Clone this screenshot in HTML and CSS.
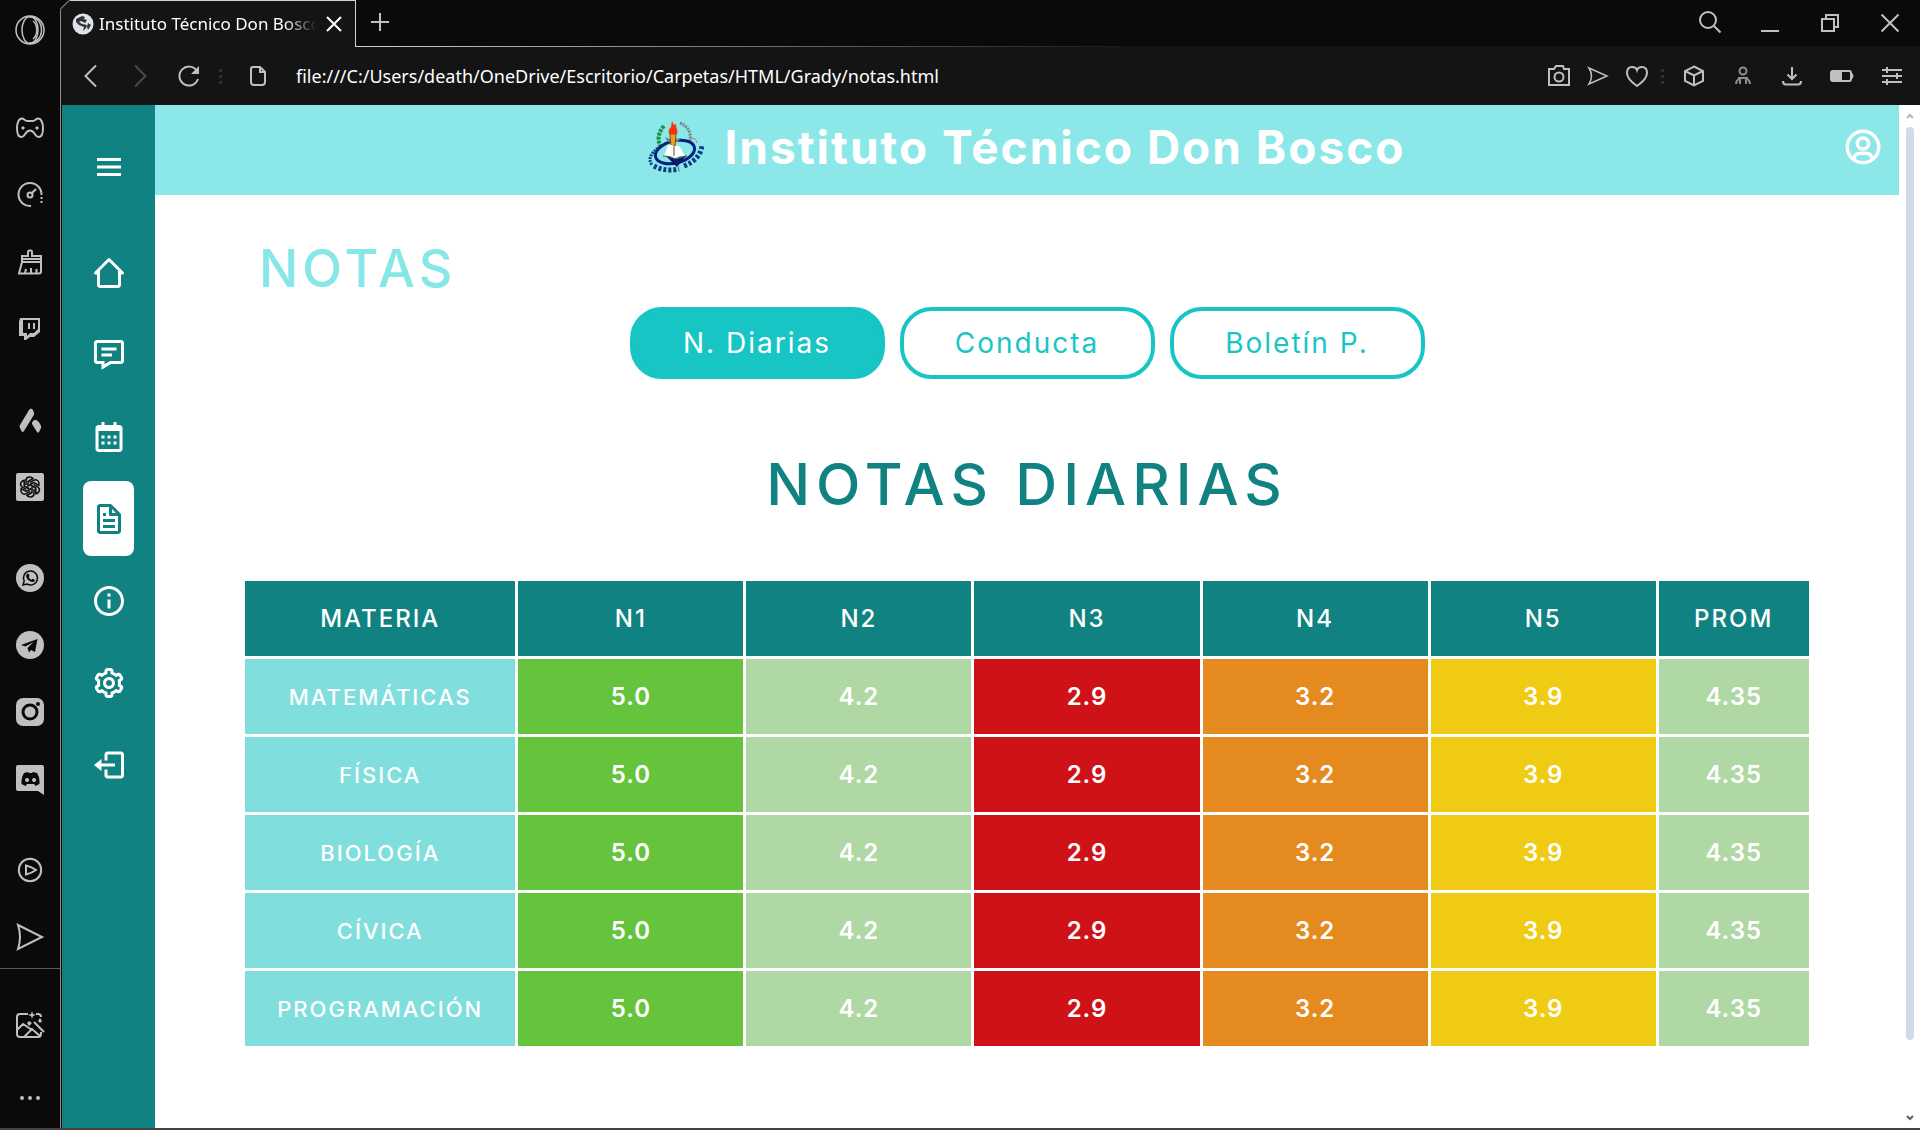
FILE: index.html
```html
<!DOCTYPE html>
<html lang="es">
<head>
<meta charset="utf-8">
<title>Instituto Técnico Don Bosco</title>
<link rel="stylesheet" href="styles.css">
</head>
<body>
<div class="browser">
  <aside class="dock" aria-label="Barra lateral del navegador">
    <div class="dock-group first">
      <button class="icon-btn" aria-label="Opera"><svg width="32" height="32" viewBox="0 0 32 32"><circle class="mid" cx="16" cy="16" r="14"/><ellipse class="mid" cx="16" cy="16" rx="8" ry="13.5"/><path class="mid" d="M19 7c5 4 5 14 0 18M15 3c8-1 12.500 6 12.500 13S23 29 15 29"/></svg></button>
    </div>
    <div class="dock-group">
      <button class="icon-btn" aria-label="GX Corner"><svg width="32" height="32" viewBox="0 0 32 32"><path class="w2" d="M8 6.500c2 0 3 2.500 5 2.500h6c2 0 3-2.500 5-2.500 3 0 5 4 5 9.500 0 6-1 9-4.500 9-4 0-3.500-6.500-8.500-6.500S11.500 25 7.500 25C4 25 3 22 3 16c0-5.500 2-9.500 5-9.500z"/><path class="w2" d="M7.500 16h3M21.500 16h3M9 14.500v3M23 14.500v3"/></svg></button>
      <button class="icon-btn" aria-label="Control GX"><svg width="32" height="32" viewBox="0 0 32 32"><path class="w2" d="M17 27A11.500 11.500 0 1 1 27.500 16M18 14l4-4"/><circle class="w2" cx="16" cy="16" r="2.500"/><path class="w2" stroke-dasharray="2 2" d="M27.500 18v7"/></svg></button>
      <button class="icon-btn" aria-label="Limpiador"><svg width="32" height="32" viewBox="0 0 32 32"><path class="w2" d="M8 16V10h6V6q0-1.500 1.500-1.500h1.500Q18 4.500 18 6v4h9v6zM8 13h19M8 16 5 27.500h20q2 0 2-2V16M11 27l1-4M17 27v-5M22.500 27v-4"/></svg></button>
      <button class="icon-btn" aria-label="Twitch"><svg width="32" height="32" viewBox="0 0 32 32"><path class="solid" fill-rule="evenodd" d="M6 5h20v14l-6 5h-4l-4 3h-2v-4H5V9zM9 7v13h4v3l3-3h4l4-4V7zM14 10h2v6h-2zM19 10h2v6h-2z"/></svg></button>
    </div>
    <div class="dock-group">
      <button class="icon-btn" aria-label="Aria"><svg width="32" height="32" viewBox="0 0 32 32"><path class="solid" d="M15 6q2-3 4 0l1 3q.5 1-.5 2.500L10 27q-1.500 2-2.500 0l-1.500-3q-1-2 0-3zM19 17q1-1.500 3-1 3 1 5 6 .5 1 0 2l-2 4q-1 1-2 0l-5-8q-.5-1 1-3z"/></svg></button>
      <button class="icon-btn" aria-label="ChatGPT"><svg width="32" height="32" viewBox="0 0 32 32"><rect class="solid" x="2" y="2" width="28" height="28" rx="2"/><g class="dark"><path id="petal" d="M12 14v-4.500q0-3 3-3.500 2.500-.3 4 1.500l-5 3v6"/><use href="#petal" transform="rotate(60 16 16)"/><use href="#petal" transform="rotate(120 16 16)"/><use href="#petal" transform="rotate(180 16 16)"/><use href="#petal" transform="rotate(240 16 16)"/><use href="#petal" transform="rotate(300 16 16)"/></g></svg></button>
    </div>
    <div class="dock-group">
      <button class="icon-btn" aria-label="WhatsApp"><svg width="32" height="32" viewBox="0 0 32 32"><circle class="solid" cx="16" cy="16" r="14"/><path class="dark" d="M9 23l1.200-4A7 7 0 1 1 13 22z"/><path class="ink" d="M13 12q1-1 2 .5l.5 1.500-.7 1.200q1 2 2.700 2.500l1-1 2.200 1q.5 2-2 2.300c-3.500 0-7-4-6.500-6.500z"/></svg></button>
      <button class="icon-btn" aria-label="Telegram"><svg width="32" height="32" viewBox="0 0 32 32"><circle class="solid" cx="16" cy="16" r="14"/><path class="ink" d="M7 16 23.500 10l-2.500 13-4-2-2 2.500-1.500-4.500 6-6-8 4.500z"/></svg></button>
      <button class="icon-btn" aria-label="Instagram"><svg width="32" height="32" viewBox="0 0 32 32"><rect class="solid" x="2" y="2" width="28" height="28" rx="7"/><circle class="dark thick" cx="16" cy="16" r="7"/><circle class="ink" cx="24" cy="8" r="2"/></svg></button>
      <button class="icon-btn" aria-label="Discord"><svg width="32" height="32" viewBox="0 0 32 32"><path class="solid" d="M4 2h24q2 0 2 2v28l-6-4H4q-2 0-2-2V4q0-2 2-2z"/><path class="ink" fill-rule="evenodd" d="M10 10l4-1 1 1h3l1-1 4 1q3 5 2.500 11l-4 2-1.500-2h-7l-1.500 2-4-2Q7 15 10 10zM13 15a2 2 0 1 0 .1 0zM20 15a2 2 0 1 0 .1 0z"/></svg></button>
    </div>
    <div class="dock-group">
      <button class="icon-btn" aria-label="Reproductor"><svg width="32" height="32" viewBox="0 0 32 32"><circle class="w2" cx="16" cy="16" r="11.200"/><path class="w2" d="M12 11.500q6 1.500 10 4.500-4 3-10 4.500z"/></svg></button>
      <button class="icon-btn" aria-label="Mi Flow"><svg width="32" height="32" viewBox="0 0 32 32"><path class="w2" d="M4 4l24 12L4 28q4-12 0-24z"/></svg></button>
    </div>
    <div class="dock-foot">
      <button class="icon-btn" aria-label="Imágenes"><svg width="32" height="32" viewBox="0 0 32 32"><path class="w2" d="M14 5H6q-3 0-3 3v17q0 3 3 3h18q3 0 3-3v-2M22 5h2q3 0 3 3M3 21l6-6 9 6M10 28l8-8 8 7M20 13l10 10"/><path class="solid" d="M18 2l1 3 3 1-3 1-1 3-1-3-3-1 3-1zM15 12l3 2-3 3-2-3zM26 9l2 3-2 2-2-2z"/></svg></button>
      <button class="icon-btn" aria-label="Más"><svg width="32" height="32" viewBox="0 0 32 32"><g class="solid"><circle cx="8" cy="16" r="2"/><circle cx="16" cy="16" r="2"/><circle cx="24" cy="16" r="2"/></g></svg></button>
    </div>
  </aside>

  <div class="window">
    <div class="tabs">
      <div class="tab">
        <svg class="tab-edge" width="10" height="10" viewBox="0 0 10 10"><path class="corner" d="M0 0h10L0 10z"/><path d="M0 9.500 9 .5"/></svg>
        <svg width="22" height="22" viewBox="0 0 22 22"><circle class="globe" cx="11" cy="11" r="10.500"/><path class="land" d="M4 6l6-3 3 1-1 2 3 1-2 3-4-2-2 1 3 2 5 1-1 3-3 3 1-4-5-2-3-3zM16 10l3 2-3 5-1-3z"/></svg>
        <span class="tab-title">Instituto Técnico Don Bosco</span>
        <button class="icon-btn" aria-label="Cerrar pestaña"><svg width="16" height="16" viewBox="0 0 16 16"><path class="w2 bright" d="M1 1l14 14M15 1 1 15"/></svg></button>
      </div>
      <div class="tabstrip">
        <button class="icon-btn" aria-label="Nueva pestaña"><svg width="18" height="18" viewBox="0 0 18 18"><path class="w2" d="M9 0v18M0 9h18"/></svg></button>
        <div class="window-controls">
          <button class="icon-btn" aria-label="Buscar"><svg width="24" height="24" viewBox="0 0 24 24"><circle class="w2" cx="10" cy="10" r="8"/><path class="w2" d="M16 16l6.500 6.500"/></svg></button>
          <button class="icon-btn" aria-label="Minimizar"><svg width="24" height="24" viewBox="0 0 24 24"><path class="w2" d="M3 21h18"/></svg></button>
          <button class="icon-btn" aria-label="Restaurar"><svg width="24" height="24" viewBox="0 0 24 24"><path class="w2" d="M4 9h12v12H4zM8 9V5h12v12h-4"/></svg></button>
          <button class="icon-btn" aria-label="Cerrar"><svg width="24" height="24" viewBox="0 0 24 24"><path class="w2" d="M3.500 4.500l17 17M20.500 4.500l-17 17"/></svg></button>
        </div>
      </div>
    </div>

    <div class="toolbar">
      <div class="nav-buttons">
        <button class="icon-btn" aria-label="Atrás"><svg width="24" height="24" viewBox="0 0 24 24"><path class="w2" d="M17 1.500 6.500 12 17 22.500"/></svg></button>
        <button class="icon-btn dim" aria-label="Adelante"><svg width="24" height="24" viewBox="0 0 24 24"><path class="w2" d="M7 1.500 17.500 12 7 22.500"/></svg></button>
        <button class="icon-btn" aria-label="Recargar"><svg width="24" height="24" viewBox="0 0 24 24"><path class="w2" d="M20 7a9.500 9.500 0 1 0 1 8"/><path class="solid" d="M22 2v8h-8z"/></svg></button>
      </div>
      <span class="dots"></span>
      <svg class="page-icon" width="16" height="20" viewBox="0 0 16 20"><path class="w2" d="M10 1H3Q1 1 1 3v13q0 3 3 3h8q3 0 3-3V6zM10 1v5h5"/></svg>
      <input class="address" type="text" aria-label="Dirección" value="file:///C:/Users/death/OneDrive/Escritorio/Carpetas/HTML/Grady/notas.html">
      <div class="page-tools">
        <button class="icon-btn" aria-label="Captura"><svg width="24" height="24" viewBox="0 0 24 24"><path class="w2" d="M2 5h5l2-3h7l1 3h5v16H2z"/><circle class="w2" cx="12" cy="13" r="4.500"/></svg></button>
        <button class="icon-btn" aria-label="Enviar"><svg width="24" height="24" viewBox="0 0 24 24"><path class="mid" d="M3 4l18 8-18 8q5-8 0-16z"/></svg></button>
        <button class="icon-btn" aria-label="Favorito"><svg width="24" height="24" viewBox="0 0 24 24"><path class="w2" d="M12 22Q2 15 2 9q0-6 5-6 4 0 5 3 1-3 5-3 5 0 5 6 0 6-10 13z"/></svg></button>
      </div>
      <span class="dots"></span>
      <div class="extras">
        <button class="icon-btn" aria-label="Extensiones"><svg width="24" height="24" viewBox="0 0 24 24"><path class="w2" d="M12 2.500 21 7v10l-9 4.500L3 17V7zM3 7l9 4.500L21 7M12 11.500v10"/></svg></button>
        <button class="icon-btn faded" aria-label="Perfil"><svg width="24" height="24" viewBox="0 0 24 24"><circle class="w2" cx="12" cy="7" r="3.500"/><path class="w2" d="M5 20q0-3 2.500-5M19 20q0-3-2.500-5M7 14h10M9 14v6M15 14v6"/></svg></button>
        <button class="icon-btn" aria-label="Descargas"><svg width="24" height="24" viewBox="0 0 24 24"><path class="w2" d="M12 3v12M7.500 10.500 12 15l4.500-4.500M3 17q0 3.500 3 3.500h12q3 0 3-3.500"/></svg></button>
        <button class="icon-btn" aria-label="Batería"><svg width="26" height="24" viewBox="0 0 26 24"><rect class="w2" x="2" y="7" width="20" height="10" rx="2"/><path class="solid" d="M3 6h10v12H3zM23 9q3 3 0 6z"/></svg></button>
        <button class="icon-btn" aria-label="Configuración rápida"><svg width="24" height="24" viewBox="0 0 24 24"><path class="w2" d="M2 6h20M2 12h20M2 18h20M7 3v6M17 9v6M7 15v6"/></svg></button>
      </div>
    </div>

    <div class="viewport">
      <nav class="menu" aria-label="Menú principal">
        <button class="menu-toggle" aria-label="Abrir menú"><svg width="36" height="36" viewBox="0 0 24 24"><path class="fill" d="M4 6h16v2H4zm0 5h16v2H4zm0 5h16v2H4z"/></svg></button>
        <a class="menu-link" href="#inicio" aria-label="Inicio"><svg width="36" height="36" viewBox="0 0 24 24"><path class="fill" d="M3 13h1v7c0 1.103.897 2 2 2h12c1.103 0 2-.897 2-2v-7h1a1 1 0 0 0 .707-1.707l-9-9a.999.999 0 0 0-1.414 0l-9 9A1 1 0 0 0 3 13zm9-8.586 6 6V15l.001 5H6v-9.586l6-6z"/></svg></a>
        <a class="menu-link" href="#mensajes" aria-label="Mensajes"><svg width="36" height="36" viewBox="0 0 24 24"><path class="fill" d="M20 2H4c-1.103 0-2 .897-2 2v12c0 1.103.897 2 2 2h3v3.767L13.277 18H20c1.103 0 2-.897 2-2V4c0-1.103-.897-2-2-2zm0 14h-7.277L9 18.233V16H4V4h16v12z"/><path class="fill" d="M7 7h10v2H7zm0 4h7v2H7z"/></svg></a>
        <a class="menu-link" href="#calendario" aria-label="Calendario"><svg width="36" height="36" viewBox="0 0 24 24"><path class="fill" d="M7 11h2v2H7zm0 4h2v2H7zm4-4h2v2h-2zm0 4h2v2h-2zm4-4h2v2h-2zm0 4h2v2h-2z"/><path class="fill" d="M5 22h14c1.103 0 2-.897 2-2V6c0-1.103-.897-2-2-2h-2V2h-2v2H9V2H7v2H5c-1.103 0-2 .897-2 2v14c0 1.103.897 2 2 2zM19 8l.001 12H5V8h14z"/></svg></a>
        <a class="menu-link active" href="#notas" aria-label="Notas" aria-current="page"><svg width="36" height="36" viewBox="0 0 24 24"><path class="fill" d="M19.903 8.586a.997.997 0 0 0-.196-.293l-6-6a.997.997 0 0 0-.293-.196A.991.991 0 0 0 13 2H6c-1.103 0-2 .897-2 2v16c0 1.103.897 2 2 2h12c1.103 0 2-.897 2-2V9a.991.991 0 0 0-.097-.414zM16.586 8H14V5.414L16.586 8zM6 20V4h6v5a1 1 0 0 0 1 1h5l.002 10H6z"/><path class="fill" d="M8 16h8v2H8zm0-4h8v2H8zm0-4h2v2H8z"/></svg></a>
        <a class="menu-link" href="#info" aria-label="Información"><svg width="36" height="36" viewBox="0 0 24 24"><path class="fill" d="M12 2C6.486 2 2 6.486 2 12s4.486 10 10 10 10-4.486 10-10S17.514 2 12 2zm0 18c-4.411 0-8-3.589-8-8s3.589-8 8-8 8 3.589 8 8-3.589 8-8 8z"/><path class="fill" d="M11 11h2v6h-2zm0-4h2v2h-2z"/></svg></a>
        <a class="menu-link" href="#ajustes" aria-label="Ajustes"><svg width="36" height="36" viewBox="0 0 24 24"><path class="fill" d="M12 16c2.206 0 4-1.794 4-4s-1.794-4-4-4-4 1.794-4 4 1.794 4 4 4zm0-6c1.084 0 2 .916 2 2s-.916 2-2 2-2-.916-2-2 .916-2 2-2z"/><path class="fill" d="m2.845 16.136 1 1.730c.531.917 1.809 1.261 2.730.730l.529-.306A8.100 8.100 0 0 0 9 19.402V20c0 1.103.897 2 2 2h2c1.103 0 2-.897 2-2v-.598a8.132 8.132 0 0 0 1.896-1.111l.529.306c.923.530 2.198.188 2.731-.731l.999-1.729a2.001 2.001 0 0 0-.731-2.732l-.505-.292a7.718 7.718 0 0 0 0-2.224l.505-.292a2.002 2.002 0 0 0 .731-2.732l-.999-1.729c-.531-.920-1.808-1.265-2.731-.732l-.529.306A8.100 8.100 0 0 0 15 4.598V4c0-1.103-.897-2-2-2h-2c-1.103 0-2 .897-2 2v.598a8.132 8.132 0 0 0-1.896 1.111l-.529-.306c-.924-.531-2.200-.187-2.731.732l-.999 1.729a2.001 2.001 0 0 0 .731 2.732l.505.292a7.683 7.683 0 0 0 0 2.223l-.505.292a2.003 2.003 0 0 0-.731 2.733zm3.326-2.758A5.703 5.703 0 0 1 6 12c0-.462.058-.926.170-1.378a.999.999 0 0 0-.470-1.108l-1.123-.650.998-1.729 1.145.662a.997.997 0 0 0 1.188-.142 6.071 6.071 0 0 1 2.384-1.399A1 1 0 0 0 11 5.300V4h2v1.300a1 1 0 0 0 .708.956 6.083 6.083 0 0 1 2.384 1.399.999.999 0 0 0 1.188.142l1.144-.661 1 1.729-1.124.649a1 1 0 0 0-.470 1.108c.112.452.170.916.170 1.378 0 .461-.058.925-.171 1.378a1 1 0 0 0 .471 1.108l1.123.649-.998 1.729-1.145-.661a.996.996 0 0 0-1.188.142 6.071 6.071 0 0 1-2.384 1.399A1 1 0 0 0 13 18.700l.002 1.300H11v-1.300a1 1 0 0 0-.708-.956 6.083 6.083 0 0 1-2.384-1.399.992.992 0 0 0-1.188-.141l-1.144.662-1-1.729 1.124-.651a1 1 0 0 0 .471-1.108z"/></svg></a>
        <a class="menu-link" href="#salir" aria-label="Cerrar sesión"><svg width="36" height="36" viewBox="0 0 24 24"><path class="fill" d="m2 12 5 4v-3h9v-2H7V8z"/><path class="fill" d="M20 3H11c-1.103 0-2 .897-2 2v4h2V5h9v14h-9v-4H9v4c0 1.103.897 2 2 2h9c1.103 0 2-.897 2-2V5c0-1.103-.897-2-2-2z"/></svg></a>
      </nav>

      <div class="content">
        <header class="site-header">
          <div class="brand">
            <svg width="56" height="54" viewBox="0 0 56 54">
              <path class="leaf" d="M16 6q-9 10-3 22"/>
              <path class="gear" d="M32 3q12 5 10 18"/>
              <path class="spark" d="M43 18q5 0 6 5"/>
              <ellipse class="ring" cx="27" cy="32" rx="20" ry="11" transform="rotate(-14 27 32)"/>
              <path class="navy" d="M18 36l11 11 10-12-10 4z"/>
              <path class="arm" d="M17 17l7 3 9-2-3 4-10 0z"/>
              <path class="torch" d="M22 14h6l-1 12h-4z"/>
              <path class="flame" d="M21 14q-1-5 2-7l1-6 2 4 2-1q0 3 1 5 1 3 0 5z"/>
              <path class="book" d="M20 25q5-1 6 2 3-3 6 0l5 9q-6-1-10 2-4-3-11-2z"/>
              <path class="fold" d="M15 36q7 0 12 3 5-3 12-2M26 27v9"/>
              <path class="motto-line" d="M10 28q-12 9-6 17"/>
              <path class="motto-line wide" d="M6 46q11 6 25 3M36 46q17-7 18-21"/>
            </svg>
            <h1 class="brand-name">Instituto Técnico Don Bosco</h1>
          </div>
          <button class="profile" aria-label="Mi cuenta"><svg width="42" height="42" viewBox="0 0 24 24"><g class="avatar"><circle cx="12" cy="12" r="9"/><circle cx="12" cy="10" r="3.200"/><path d="M6.800 18.800v-.4Q7.500 15.600 10.500 15.600h3q3 0 3.700 2.800v.4"/></g></svg></button>
        </header>
        <main class="grades">
          <h2 class="section-name">NOTAS</h2>
          <div class="views">
            <button class="view selected">N. Diarias</button>
            <button class="view">Conducta</button>
            <button class="view">Boletín P.</button>
          </div>
          <h3 class="table-name">NOTAS DIARIAS</h3>
          <table class="scores">
            <thead>
              <tr><th class="subject" scope="col">MATERIA</th><th scope="col">N1</th><th scope="col">N2</th><th scope="col">N3</th><th scope="col">N4</th><th scope="col">N5</th><th class="average" scope="col">PROM</th></tr>
            </thead>
            <tbody>
              <tr><th scope="row">MATEMÁTICAS</th><td class="top">5.0</td><td class="good">4.2</td><td class="fail">2.9</td><td class="low">3.2</td><td class="fair">3.9</td><td class="good">4.35</td></tr>
              <tr><th scope="row">FÍSICA</th><td class="top">5.0</td><td class="good">4.2</td><td class="fail">2.9</td><td class="low">3.2</td><td class="fair">3.9</td><td class="good">4.35</td></tr>
              <tr><th scope="row">BIOLOGÍA</th><td class="top">5.0</td><td class="good">4.2</td><td class="fail">2.9</td><td class="low">3.2</td><td class="fair">3.9</td><td class="good">4.35</td></tr>
              <tr><th scope="row">CÍVICA</th><td class="top">5.0</td><td class="good">4.2</td><td class="fail">2.9</td><td class="low">3.2</td><td class="fair">3.9</td><td class="good">4.35</td></tr>
              <tr><th scope="row">PROGRAMACIÓN</th><td class="top">5.0</td><td class="good">4.2</td><td class="fail">2.9</td><td class="low">3.2</td><td class="fair">3.9</td><td class="good">4.35</td></tr>
            </tbody>
          </table>
        </main>
      </div>

      <div class="scrollbar" aria-hidden="true">
        <svg width="8" height="8" viewBox="0 0 8 8"><path class="arrow up" d="M1 6l3-3 3 3"/></svg>
        <span class="thumb"></span>
        <svg width="8" height="8" viewBox="0 0 8 8"><path class="arrow" d="M1 2l3 3 3-3"/></svg>
      </div>
    </div>
  </div>
</div>
</body>
</html>
```
FILE: styles.css
```css
* { box-sizing: border-box; }

body {
  margin: 0;
  background: #0a0a0a;
  font-family: Inter, "Noto Sans", sans-serif;
}

button, input { font: inherit; }

button {
  padding: 0;
  border: 0;
  background: none;
  color: inherit;
}

svg {
  display: block;
  flex: none;
  fill: none;
  stroke: currentColor;
}

a { color: inherit; }

.mid { stroke-width: 1.5; }
.w2 { stroke-width: 2; }
.bright { stroke: #fff; }
.solid { fill: currentColor; stroke: none; }
.ink { fill: #0a0a0a; stroke: none; }
.dark { stroke: #0a0a0a; stroke-width: 1.5; }
.thick { stroke-width: 3; }
.fill { fill: currentColor; stroke: none; }
.avatar { stroke-width: 2; }

.browser {
  display: flex;
  min-height: 100vh;
  border-bottom: 2px solid #4a4245;
  color: #c0c0c0;
}

.icon-btn {
  display: grid;
  place-items: center;
  min-width: 24px;
}

/* Browser dock */
.dock {
  display: flex;
  flex-direction: column;
  flex: none;
  width: 60px;
  padding-top: 14px;
}

.dock-group {
  display: flex;
  flex-direction: column;
  align-items: center;
  gap: 35px;
  padding-bottom: 59px;
}

.first { padding-bottom: 66px; }

.dock-group:nth-last-child(2) { padding-bottom: 15px; }

.dock-foot {
  display: flex;
  flex-direction: column;
  align-items: center;
  gap: 41px;
  padding-top: 40px;
  border-top: 1px solid #5a5a5a;
}

/* Tabs and toolbar */
.window {
  display: flex;
  flex-direction: column;
  flex: 1;
  min-width: 0;
  padding-left: 1px;
  border-left: 1px solid #8c8c8c;
}

.tabs {
  display: flex;
  height: 47px;
  margin-left: -1px;
}

.tab {
  position: relative;
  display: flex;
  align-items: center;
  gap: 5px;
  width: 295px;
  padding: 0 9px 0 11px;
  border-top: 1px solid #d0d0d0;
  border-right: 1px solid #d0d0d0;
  background: #141414;
}

.tab-edge {
  position: absolute;
  top: -1px;
  left: -1px;
}

.corner { fill: #0a0a0a; stroke: none; }
.globe { fill: #dfe3e8; stroke: none; }
.land { fill: #303338; stroke: none; }

.tab-title {
  flex: 1;
  overflow: hidden;
  color: #fff;
  font-family: "Noto Sans", sans-serif;
  font-size: 17px;
  line-height: 24px;
  white-space: nowrap;
  -webkit-mask-image: linear-gradient(to right, #000 85%, transparent);
  mask-image: linear-gradient(to right, #000 85%, transparent);
}

.tabstrip {
  display: flex;
  flex: 1;
  align-items: center;
  justify-content: space-between;
  padding: 0 18px 2px 12px;
  border-bottom: 1px solid;
  border-image: linear-gradient(to right, #d0d0d0, #141414 50%) 1;
}

.window-controls {
  display: flex;
  align-items: center;
  gap: 36px;
}

.toolbar {
  display: flex;
  align-items: center;
  height: 58px;
  padding: 0 16px 0 18px;
  margin-left: -1px;
  background: #141414;
}

.nav-buttons {
  display: flex;
  gap: 25px;
}

.dim { color: #4a4a4a; }
.faded { color: #909090; }

.dots {
  width: 3px;
  height: 15px;
  margin: 0 10px 0 18px;
  background: repeating-linear-gradient(#303030 0 3px, transparent 3px 6px);
}

.page-icon { margin: 0 14px 0 18px; }

.address {
  flex: 1;
  min-width: 0;
  padding: 0 16px;
  border: 0;
  outline: 0;
  background: none;
  color: #fff;
  font-family: "Noto Sans", sans-serif;
  font-size: 18px;
  line-height: 24px;
}

.page-tools {
  display: flex;
  gap: 15px;
}

.page-tools + .dots { margin: 0 18px 0 12px; }

.extras {
  display: flex;
  gap: 25px;
}

/* School page */
.viewport {
  display: flex;
  flex: 1;
  background: #fff;
}

.menu {
  display: flex;
  flex-direction: column;
  align-items: center;
  flex: none;
  gap: 7px;
  width: 93px;
  padding-top: 24px;
  background: #0f8281;
  color: #fff;
}

.menu-toggle,
.menu-link {
  display: grid;
  place-items: center;
  width: 51px;
  height: 75px;
  border-radius: 8px;
}

.menu-toggle { margin-bottom: 24px; }

.active {
  background: #fff;
  color: #0f8281;
}

.content {
  flex: 1;
  min-width: 0;
}

.site-header {
  display: grid;
  grid-template-columns: 1fr auto 1fr;
  align-items: center;
  height: 90px;
  padding: 0 15px 6px;
  background: #8ce8e8;
  color: #fff;
}

.brand {
  display: flex;
  grid-column: 2;
  align-items: center;
  gap: 20px;
}

.brand-name {
  margin: 0;
  font-size: 46px;
  font-weight: 700;
  line-height: 56px;
  letter-spacing: 2px;
}

.profile { justify-self: end; }

.leaf { stroke: #17924a; stroke-width: 4; stroke-dasharray: 3 1; }
.gear { stroke: #75838a; stroke-width: 3; stroke-dasharray: 2 1; }
.spark { stroke: #d86a6a; stroke-width: 1; }
.ring { stroke: #06207f; stroke-width: 3; }
.navy { fill: #0a1a66; stroke: none; }
.arm { fill: #6b7f84; stroke: none; }
.torch { fill: #f0a020; stroke: #7a4a10; stroke-width: 1; }
.flame { fill: #f8330c; stroke: none; }
.book { fill: #fff; stroke: none; }
.fold { stroke: #5a4a3a; stroke-width: 1; }
.motto-line { stroke: #0d3f86; stroke-width: 3; stroke-dasharray: 2 1; }
.wide { stroke-width: 5; stroke-dasharray: 3 2; }

.grades { padding: 42px 0; }

.section-name {
  margin: 0;
  padding-left: 104px;
  color: #87e7e6;
  font-size: 52px;
  font-weight: 500;
  line-height: 64px;
  letter-spacing: 4px;
}

.views {
  display: flex;
  justify-content: center;
  gap: 15px;
  padding: 6px 0 73px;
}

.view {
  width: 255px;
  height: 72px;
  border: 4px solid #18c5c5;
  border-radius: 32px;
  color: #18c5c5;
  font-size: 28px;
  line-height: 32px;
  letter-spacing: 2px;
}

.selected {
  background: #18c5c5;
  color: #fff;
}

.table-name {
  margin: 0 0 62px;
  color: #0f8281;
  font-size: 58px;
  font-weight: 500;
  line-height: 64px;
  letter-spacing: 6px;
  text-align: center;
}

.scores {
  width: 90%;
  margin: 0 auto;
  border-spacing: 3px;
  table-layout: fixed;
  color: #fff;
  font-size: 24px;
  line-height: 32px;
  letter-spacing: 1px;
  text-align: center;
}

.scores th,
.scores td {
  width: 225px;
  height: 75px;
  padding: 0;
}

.scores th { font-weight: 500; letter-spacing: 2px; }
.scores thead th { background: #0f8281; }
.scores .subject { width: 270px; }
.scores .average { width: 150px; }

.scores tbody th {
  background: #80dedd;
  font-size: 22px;
}

.scores td { font-weight: 600; }
.top { background: #66c33c; }
.good { background: #b0d8a4; }
.fail { background: #cf1217; }
.low { background: #e58a1e; }
.fair { background: #efcc13; }

.scrollbar {
  display: flex;
  flex-direction: column;
  align-items: center;
  flex: none;
  width: 21px;
  padding: 7px 0 6px;
}

.thumb {
  width: 8px;
  flex: 1;
  margin: 7px 0 74px;
  border-radius: 4px;
  background: #d0dbe5;
}

.arrow { stroke: #606060; stroke-width: 2; }
.up { stroke: #b8b8b8; }
```
